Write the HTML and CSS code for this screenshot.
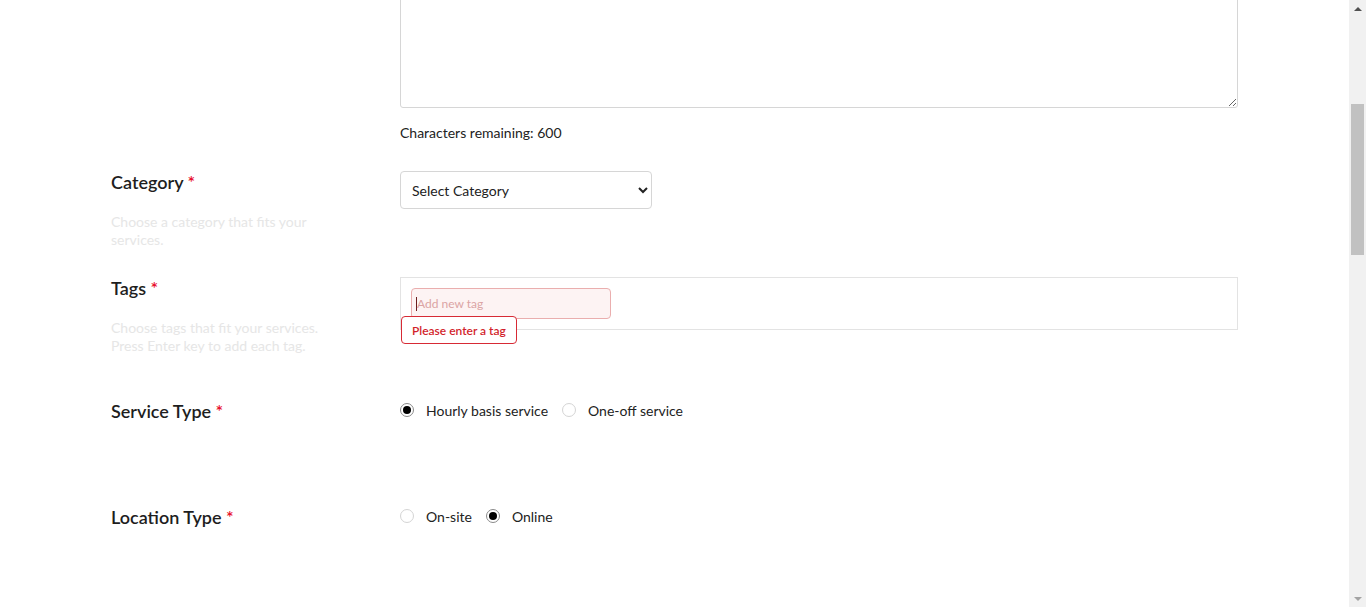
FILE: index.html
```html
<!DOCTYPE html>
<html lang="en">
<head>
<meta charset="utf-8">
<title>Create Service</title>
<link rel="stylesheet" href="styles.css">
</head>
<body>
<main class="page">
  <form class="form">
    <h1 class="page-title">Create a New Service</h1>

    <div class="row">
      <div class="label-col">
        <label class="label">Title <span class="req">*</span></label>
        <p class="hint">Give your service a short, descriptive title.</p>
      </div>
      <div class="field-col">
        <input class="text-input" type="text">
      </div>
    </div>

    <div class="row">
      <div class="label-col">
        <label class="label">Description <span class="req">*</span></label>
        <p class="hint">Describe what your service includes.</p>
      </div>
      <div class="field-col">
        <textarea class="textarea" id="desc"></textarea>
        <p class="char-count">Characters remaining: 600</p>
      </div>
    </div>

    <div class="row">
      <div class="label-col">
        <label class="label">Category <span class="req">*</span></label>
        <p class="hint">Choose a category that fits your services.</p>
      </div>
      <div class="field-col">
        <select class="select">
          <option>Select Category</option>
        </select>
      </div>
    </div>

    <div class="row">
      <div class="label-col">
        <label class="label">Tags <span class="req">*</span></label>
        <p class="hint">Choose tags that fit your services. Press Enter key to add each tag.</p>
      </div>
      <div class="field-col tags-field">
        <div class="tags-box">
          <div class="tag-input-wrap">
            <div class="tag-input"><span class="caret"></span><span class="placeholder">Add new tag</span></div>
            <div class="tag-error">Please enter a tag</div>
          </div>
        </div>
      </div>
    </div>

    <div class="row">
      <div class="label-col">
        <label class="label">Service Type <span class="req">*</span></label>
      </div>
      <div class="field-col">
        <div class="radios">
          <label class="radio"><input type="radio" name="stype" checked><span>Hourly basis service</span></label>
          <label class="radio"><input type="radio" name="stype"><span>One-off service</span></label>
        </div>
      </div>
    </div>

    <div class="row">
      <div class="label-col">
        <label class="label">Location Type <span class="req">*</span></label>
      </div>
      <div class="field-col">
        <div class="radios">
          <label class="radio"><input type="radio" name="ltype"><span>On-site</span></label>
          <label class="radio"><input type="radio" name="ltype" checked><span>Online</span></label>
        </div>
      </div>
    </div>

    <div class="row">
      <div class="label-col">
        <label class="label">Price <span class="req">*</span></label>
      </div>
      <div class="field-col">
        <input class="text-input short" type="text">
      </div>
    </div>
  </form>
</main>
<div class="fake-scrollbar" aria-hidden="true">
  <div class="sb-arrow sb-up"></div>
  <div class="sb-track"><div class="sb-thumb"></div></div>
  <div class="sb-arrow sb-down"></div>
</div>
<script src="script.js"></script>
</body>
</html>
```

FILE: styles.css
```css
html, body {
  margin: 0;
  padding: 0;
  background: #fff;
}
body {
  font-family: Lato, "Noto Sans", "Liberation Sans", sans-serif;
  color: #222;
  min-height: 2303px;
}
.page {
  width: 1127px;
  padding: 60px 0 0 111px;
}
.page-title {
  font-size: 28px;
  font-weight: 700;
  margin: 0 0 40px;
}
.form {
  display: flex;
  flex-direction: column;
  gap: 28px;
}
.row {
  display: grid;
  grid-template-columns: 289px 838px;
  min-height: 78px;
}
.label {
  display: block;
  font-size: 18px;
  line-height: 22px;
  font-weight: 600;
  color: #1e1e1e;
}
.req {
  color: #e8112d;
  font-weight: 600;
}
.hint {
  margin: 20px 0 0;
  width: 230px;
  font-size: 14px;
  line-height: 18px;
  color: #e6e6e6;
}
.text-input {
  box-sizing: border-box;
  width: 100%;
  height: 38px;
  border: 1px solid #d6d6d6;
  border-radius: 4px;
}
.text-input.short {
  width: 252px;
}
.textarea {
  display: block;
  box-sizing: border-box;
  width: 100%;
  height: 200px;
  border: 1px solid #d6d6d6;
  border-radius: 3px;
  resize: vertical;
  font-family: inherit;
}
.char-count {
  margin: 15px 0 1px;
  font-size: 14px;
  line-height: 19px;
  color: #222;
}
.select {
  box-sizing: border-box;
  width: 252px;
  height: 38px;
  padding: 0 7px;
  border: 1px solid #d6d6d6;
  border-radius: 4px;
  background: #fff;
  font-family: inherit;
  font-size: 14px;
  color: #222;
}
.tags-field {
  padding-bottom: 42px;
}
.tags-box {
  box-sizing: border-box;
  height: 53px;
  border: 1px solid #e3e3e3;
  padding: 10px 10px;
}
.tag-input-wrap {
  position: relative;
  width: 200px;
}
.tag-input {
  box-sizing: border-box;
  height: 31px;
  display: flex;
  align-items: center;
  padding-left: 4px;
  background: #fdf3f3;
  border: 1px solid #eaaeae;
  border-radius: 4px;
  font-size: 12px;
}
.caret {
  width: 1px;
  height: 14px;
  background: #6b1d1d;
}
.placeholder {
  color: #dba4a4;
}
.tag-error {
  position: absolute;
  left: -10px;
  top: 28px;
  box-sizing: border-box;
  height: 28px;
  padding: 0 10px;
  display: flex;
  align-items: center;
  background: #fff;
  border: 1px solid #d72a35;
  border-radius: 4px;
  font-size: 12px;
  font-weight: 600;
  color: #d21f2c;
  white-space: nowrap;
}
.radios {
  display: flex;
  align-items: center;
  gap: 14px;
  height: 20px;
}
.radio {
  display: flex;
  align-items: center;
  gap: 12px;
  font-size: 14px;
  color: #222;
}
.radio input {
  appearance: none;
  -webkit-appearance: none;
  margin: 0;
  width: 14px;
  height: 14px;
  border: 1px solid #d4d4d4;
  border-radius: 50%;
  background: #fff;
  display: grid;
  place-items: center;
}
.radio input:checked {
  border-color: #8a8a8a;
}
.radio input:checked::after {
  content: "";
  width: 8px;
  height: 8px;
  border-radius: 50%;
  background: #000;
}

/* imitation of the browser's vertical scrollbar */
.fake-scrollbar {
  position: fixed;
  top: 0;
  right: 0;
  bottom: 0;
  width: 17px;
  background: #f1f1f1;
  display: flex;
  flex-direction: column;
}
.sb-arrow {
  height: 17px;
  display: flex;
  align-items: center;
  justify-content: center;
}
.sb-up::before,
.sb-down::before {
  content: "";
  width: 0;
  height: 0;
  border-left: 4px solid transparent;
  border-right: 4px solid transparent;
}
.sb-up::before {
  border-bottom: 4px solid #505050;
}
.sb-down::before {
  border-top: 4px solid #a3a3a3;
}
.sb-track {
  flex: 1;
  padding: 87px 2px 0;
}
.sb-thumb {
  height: 151px;
  background: #c1c1c1;
}
```

FILE: script.js
```js
(function () {
  var ta = document.getElementById('desc');
  var bottom = ta.getBoundingClientRect().bottom + window.scrollY;
  window.scrollTo(0, bottom - 108);
})();
```
